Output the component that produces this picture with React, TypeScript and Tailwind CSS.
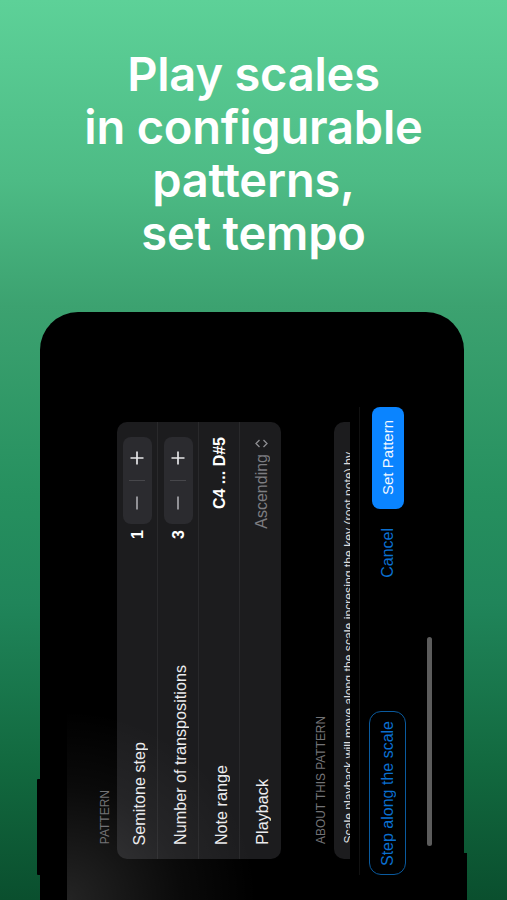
const font = "font-['Liberation_Sans',Arial,sans-serif]";

function V({ className = "", children }: { className?: string; children: React.ReactNode }) {
  return <span className={`block [writing-mode:vertical-rl] rotate-180 whitespace-nowrap ${className}`}>{children}</span>;
}

function Stepper() {
  return (
    <div className="w-[29px] h-[87px] rounded-[8px] bg-[#2b2b2f] flex flex-col items-center">
      <svg className="mt-[14px]" width="14" height="14" viewBox="0 0 14 14" stroke="#e6e6e8" strokeWidth="1.7">
        <path d="M7 0.5v13M0.5 7h13" />
      </svg>
      <div className="mt-[15px] w-[16px] h-px bg-[#47474b]" />
      <svg className="mt-[15px]" width="14" height="14" viewBox="0 0 14 14" stroke="#a5a5a9" strokeWidth="1.7">
        <path d="M7 0.5v13" />
      </svg>
    </div>
  );
}

function Row({ label, children, last }: { label: string; children: React.ReactNode; last?: boolean }) {
  return (
    <div className={`w-[41px] h-full pt-[15px] pb-[14px] flex flex-col items-center justify-between ${last ? "" : "border-r border-[#29292b]"}`}>
      <div className="flex flex-col items-center">{children}</div>
      <V className="ml-[3px] text-[16.2px] leading-[18px] text-[#ececee]">{label}</V>
    </div>
  );
}

export default function App() {
  return (
    <div className={`w-[507px] h-[900px] overflow-hidden flex flex-col bg-[linear-gradient(180deg,#5dd198_0%,#4dbb85_20%,#3ca270_34%,#26905f_55%,#20855a_67%,#12693f_85%,#0a4f2e_100%)] ${font}`}>
      <h1 className="mt-[47px] h-[265px] text-center text-white text-[47px] leading-[53px] font-semibold font-['Inter',sans-serif] tracking-[-0.2px]">
        Play scales
        <br />
        in configurable
        <br />
        patterns,
        <br />
        set tempo
      </h1>

      <div className="relative ml-[40px] w-[424px] h-[588px] bg-black rounded-t-[38px] flex flex-row items-start">
        <div className="absolute -left-[3px] top-[467px] w-[3px] h-[96px] bg-black rounded-l-[1px]" />
        <div className="absolute -right-[3px] top-[541px] w-[3px] h-[47px] bg-black" />
        <div className="absolute left-[27px] top-[380px] w-[397px] h-[208px] pointer-events-none bg-[radial-gradient(ellipse_190px_190px_at_0%_100%,rgba(255,255,255,0.14),rgba(255,255,255,0.04)_60%,rgba(255,255,255,0)_100%)]" />

        <div className="ml-[58px] w-[14px] h-[532px] flex items-end">
          <V className="text-[12px] leading-[14px] text-[#737376]">PATTERN</V>
        </div>

        <div className="ml-[5px] mt-[110px] w-[164px] h-[437px] rounded-[10px] bg-[#1c1c1e] flex flex-row">
          <Row label="Semitone step">
            <Stepper />
            <V className="ml-[1px] mt-[6px] text-[16px] leading-[18px] font-bold text-white">1</V>
          </Row>
          <Row label="Number of transpositions">
            <Stepper />
            <V className="ml-[1px] mt-[6px] text-[16px] leading-[18px] font-bold text-white">3</V>
          </Row>
          <Row label="Note range">
            <V className="ml-[2px] text-[16px] leading-[18px] font-bold text-white">C4 ... D#5</V>
          </Row>
          <Row label="Playback" last>
            <svg className="ml-[1px] mt-[2px]" width="13" height="9" viewBox="0 0 13 9" fill="none" stroke="#8e8e92" strokeWidth="1.3">
              <path d="M4.5 1L1 4.5L4.5 8M8.5 1L12 4.5L8.5 8" />
            </svg>
            <V className="ml-[2px] mt-[6px] text-[16px] leading-[18px] text-[#7d7d81]">Ascending</V>
          </Row>
        </div>

        <div className="ml-[33px] w-[14px] h-[532px] flex items-end">
          <V className="text-[11.9px] leading-[14px] text-[#737376]">ABOUT THIS PATTERN</V>
        </div>

        <div className="ml-[6px] mt-[110px] w-[16px] h-[437px] rounded-l-[10px] bg-[#1c1c1e] overflow-hidden pb-[15px] flex items-end">
          <V className="ml-[7px] text-[12.2px] leading-[16px] text-[#dcdcde]">Scale playback will move along the scale incresing the key (root note) by</V>
        </div>

        <div className="ml-[9px] mt-[95px] w-[48px] h-[468px] border-l border-[#111111] pl-[9px] flex flex-col">
          <div className="ml-[3px] w-[32px] h-[102px] rounded-[8px] bg-[#0a84ff] flex items-center justify-center">
            <V className="text-[15px] leading-[18px] text-[#f2f8ff]">Set Pattern</V>
          </div>
          <div className="mt-[19px] ml-[3px] w-[32px] flex justify-center">
            <V className="text-[16px] leading-[18px] text-[#0a6fd0]">Cancel</V>
          </div>
          <div className="mt-auto w-[37px] h-[164px] rounded-[12px] border-[1.5px] border-[#0a5a9e] flex items-center justify-center">
            <V className="text-[16px] leading-[18px] text-[#0a6fd0]">Step along the scale</V>
          </div>
        </div>

        <div className="ml-[20px] mt-[325px] w-[5px] h-[209px] rounded-full bg-[#5c5c5c]" />
      </div>
    </div>
  );
}
